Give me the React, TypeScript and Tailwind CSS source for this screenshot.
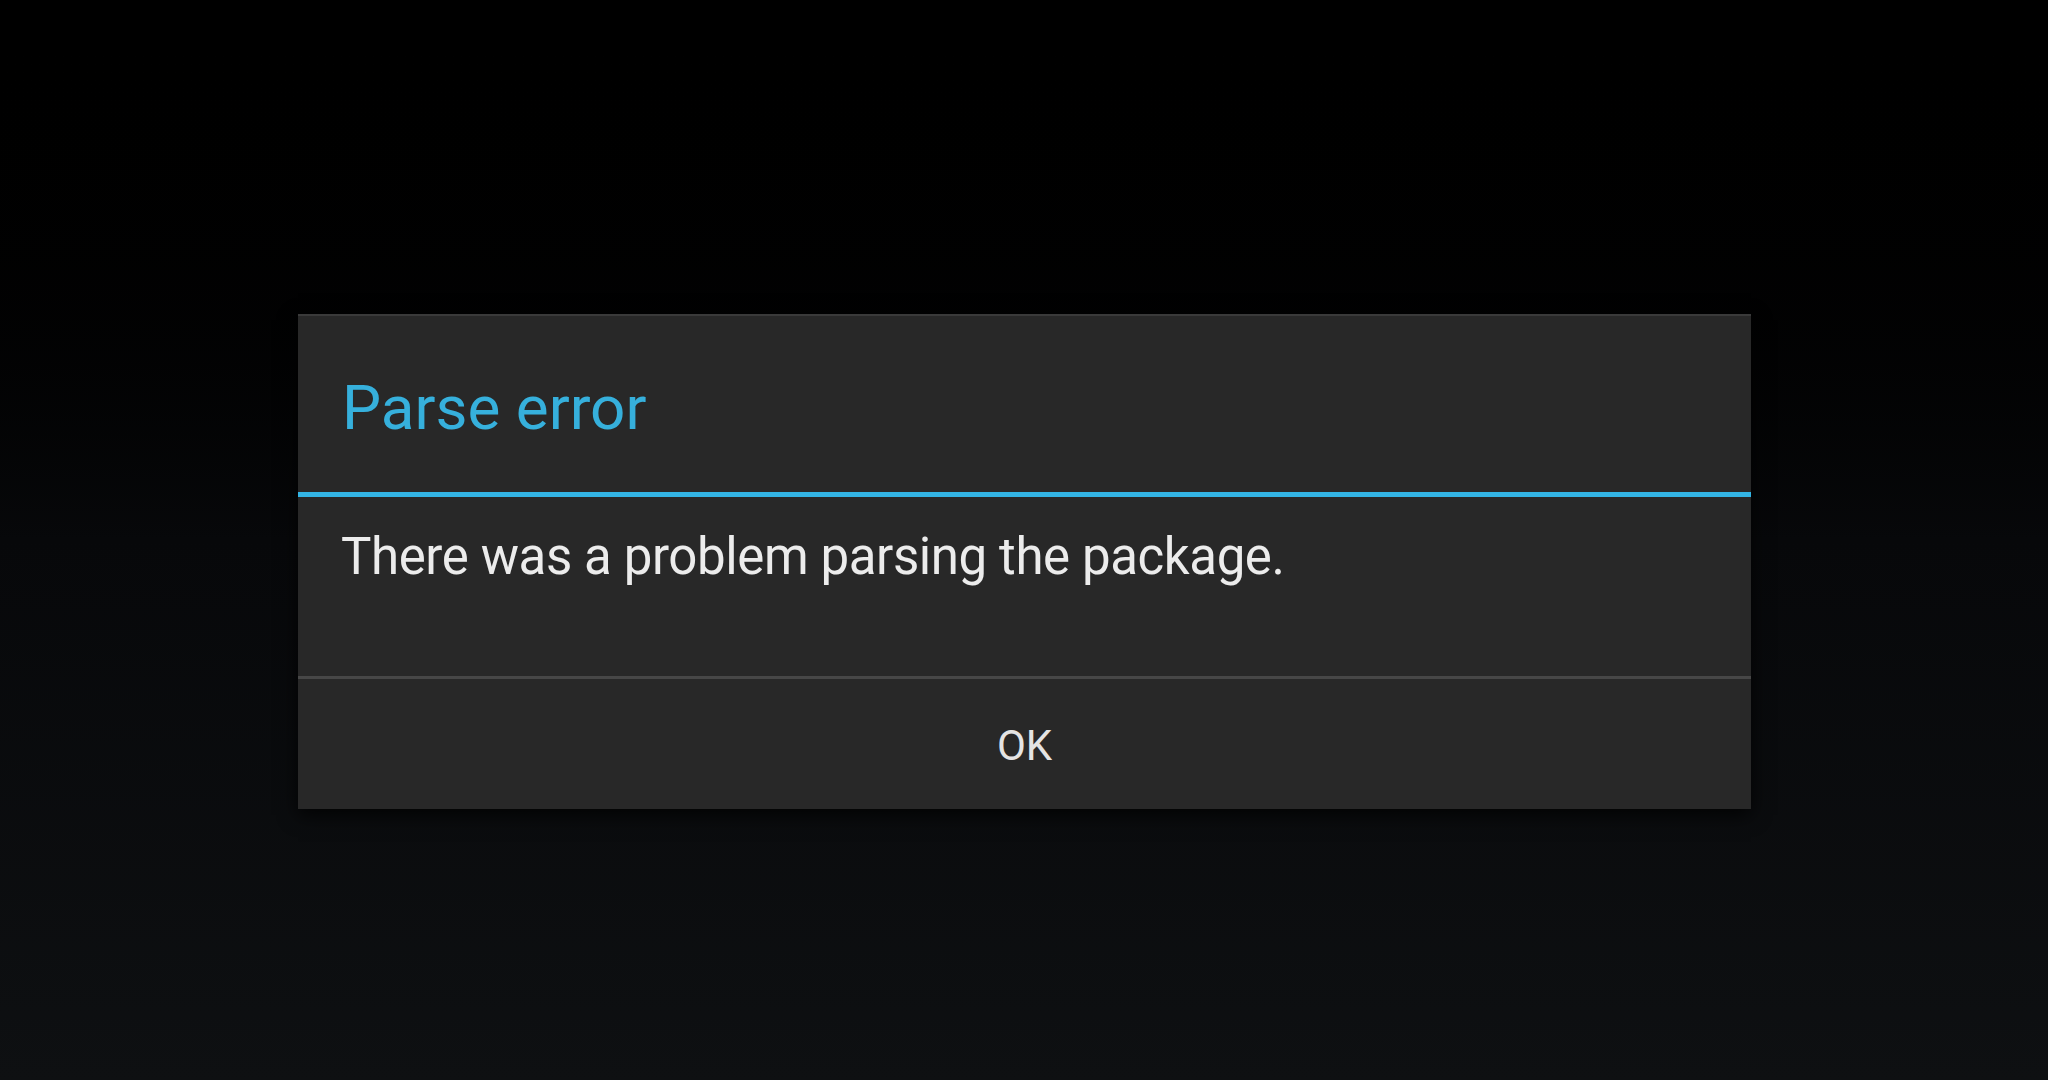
function ParseErrorDialog() {
	return (
		<div className="w-[1453px] bg-[#282828] border-t-2 border-[#3a3a3a] shadow-[0_6px_18px_rgba(0,0,0,0.8)] font-['Roboto',sans-serif]">
			<div className="h-[176px] pt-[61px] pl-[44px] text-[62px] leading-none text-[#36b0dc]">
				Parse error
			</div>
			<div className="h-[5px] bg-[#33b5e5]"></div>
			<div className="h-[179px] pt-[34px] pl-[43px] text-[51px] leading-none tracking-[-0.4px] text-[#ececec]">
				There was a problem parsing the package.
			</div>
			<div className="h-[3px] bg-[#474747]"></div>
			<div className="h-[130px] pt-[46px] text-center text-[42px] leading-none text-[#e4e4e4]">
				OK
			</div>
		</div>
	)
}

export default function App() {
	return (
		<div className="w-[2048px] h-[1080px] bg-gradient-to-b from-[#000000] via-[#07080a] to-[#0e1012] pt-[314px] pl-[298px]">
			<ParseErrorDialog />
		</div>
	)
}
